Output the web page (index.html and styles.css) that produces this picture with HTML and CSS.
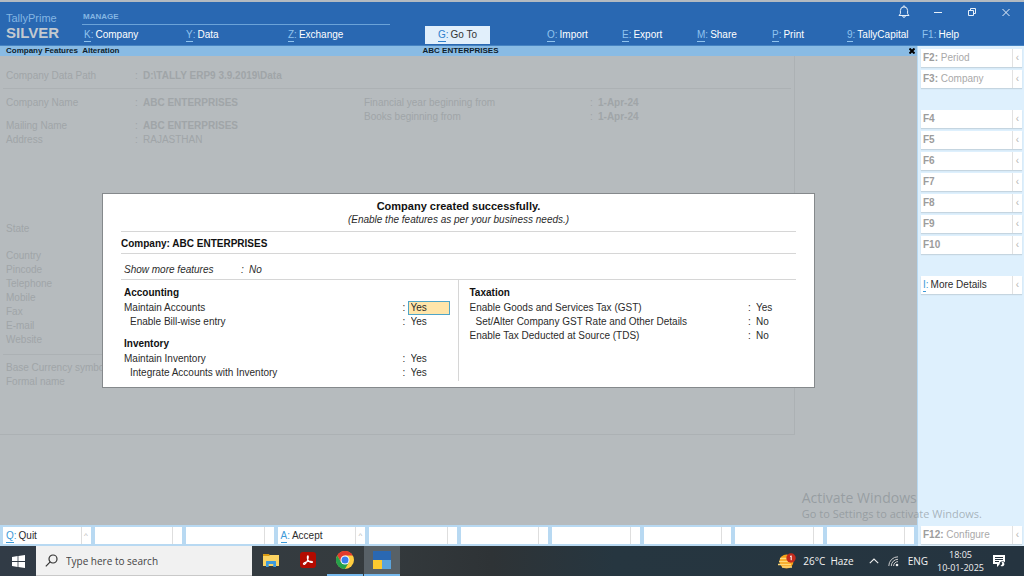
FILE: index.html
```html
<!DOCTYPE html>
<html lang="en">
<head>
<meta charset="utf-8">
<meta name="viewport" content="width=device-width, initial-scale=1">
<title>TallyPrime - Company Features Alteration</title>
<link rel="stylesheet" href="styles.css">
</head>
<body>
<div class="app">
  <header class="topbar">
    <div class="brand">
      <span class="brand-name">TallyPrime</span>
      <span class="brand-edition">SILVER</span>
    </div>
    <div class="manage">
      <span class="manage-title">MANAGE</span>
      <nav class="manage-menu">
        <button class="menu-item"><span class="key">K</span><i>:</i>Company</button>
        <button class="menu-item"><span class="key">Y</span><i>:</i>Data</button>
        <button class="menu-item"><span class="key">Z</span><i>:</i>Exchange</button>
      </nav>
    </div>
    <div class="goto-wrap">
      <button class="goto"><span class="key">G</span><i>:</i>Go To</button>
    </div>
    <div class="right-area">
      <div class="window-controls">
        <button class="win-btn" aria-label="Notifications"><svg width="12" height="14" viewBox="0 0 12 14"><path d="M1 10.5h10L9.600 8.800V5.500a3.600 3.600 0 0 0-7.200 0v3.300zM5 1.800a1 1 0 0 1 2 0M4.700 11a1.300 1.300 0 0 0 2.600 0"/></svg></button>
        <button class="win-btn" aria-label="Minimize"><svg width="12" height="14" viewBox="0 0 12 14"><path d="M2 7.500h8"/></svg></button>
        <button class="win-btn" aria-label="Restore"><svg width="12" height="14" viewBox="0 0 12 14"><path d="M2.500 5.500h5v5h-5zM4.500 5.500v-2h5v5h-2"/></svg></button>
        <button class="win-btn" aria-label="Close window"><svg width="12" height="14" viewBox="0 0 12 14"><path d="M2.500 4l7 7M9.500 4l-7 7"/></svg></button>
      </div>
      <nav class="right-menu">
        <button class="menu-item"><span class="key">O</span><i>:</i>Import</button>
        <button class="menu-item"><span class="key">E</span><i>:</i>Export</button>
        <button class="menu-item"><span class="key">M</span><i>:</i>Share</button>
        <button class="menu-item"><span class="key">P</span><i>:</i>Print</button>
        <button class="menu-item"><span class="key">9</span><i>:</i>TallyCapital</button>
        <button class="menu-item"><span class="key plain">F1</span><i>:</i>Help</button>
      </nav>
    </div>
  </header>

  <div class="content">
    <main class="main">
      <div class="titlebar">
        <span>Company Features&nbsp; Alteration</span>
        <span class="titlebar-company">ABC ENTERPRISES</span>
        <button class="titlebar-close" aria-label="Close"><svg width="6" height="6" viewBox="0 0 6 6"><path d="M.5.5l5 5M5.500.5l-5 5"/></svg></button>
      </div>

      <div class="workspace">
        <section class="form">
          <dl class="form-part path-part">
            <div class="field"><dt>Company Data Path</dt><dd class="strong">D:\TALLY ERP9 3.9.2019\Data</dd></div>
          </dl>
          <div class="form-part details-part">
            <dl class="details">
              <div class="field space-after"><dt>Company Name</dt><dd class="strong">ABC ENTERPRISES</dd></div>
              <div class="field"><dt>Mailing Name</dt><dd class="strong">ABC ENTERPRISES</dd></div>
              <div class="field address"><dt>Address</dt><dd>RAJASTHAN</dd></div>
              <div class="field state"><dt>State</dt></div>
              <div class="field"><dt>Country</dt></div>
              <div class="field"><dt>Pincode</dt></div>
              <div class="field"><dt>Telephone</dt></div>
              <div class="field"><dt>Mobile</dt></div>
              <div class="field"><dt>Fax</dt></div>
              <div class="field"><dt>E-mail</dt></div>
              <div class="field"><dt>Website</dt></div>
            </dl>
            <dl class="years">
              <div class="field"><dt>Financial year beginning from</dt><dd class="strong">1-Apr-24</dd></div>
              <div class="field"><dt>Books beginning from</dt><dd class="strong">1-Apr-24</dd></div>
            </dl>
          </div>
          <dl class="form-part currency-part">
            <div class="field"><dt>Base Currency symbol</dt></div>
            <div class="field"><dt>Formal name</dt></div>
          </dl>
        </section>

        <div class="overlay">
          <section class="dialog" role="dialog" aria-labelledby="dialog-title">
            <h1 id="dialog-title" class="dialog-title">Company created successfully.</h1>
            <p class="dialog-note">(Enable the features as per your business needs.)</p>
            <p class="dialog-company">Company: ABC ENTERPRISES</p>
            <label class="more-row"><span class="more-label">Show more features</span><span class="colon">:</span><input class="value" value="No"></label>
            <div class="features">
              <div class="feature-col">
                <h2 class="group-title">Accounting</h2>
                <label class="feature"><span class="feature-label">Maintain Accounts</span><span class="colon">:</span><input class="value active" value="Yes"></label>
                <label class="feature sub"><span class="feature-label">Enable Bill-wise entry</span><span class="colon">:</span><input class="value" value="Yes"></label>
                <h2 class="group-title later">Inventory</h2>
                <label class="feature"><span class="feature-label">Maintain Inventory</span><span class="colon">:</span><input class="value" value="Yes"></label>
                <label class="feature sub"><span class="feature-label">Integrate Accounts with Inventory</span><span class="colon">:</span><input class="value" value="Yes"></label>
              </div>
              <div class="feature-col taxation">
                <h2 class="group-title">Taxation</h2>
                <label class="feature"><span class="feature-label">Enable Goods and Services Tax (GST)</span><span class="colon">:</span><input class="value" value="Yes"></label>
                <label class="feature sub"><span class="feature-label">Set/Alter Company GST Rate and Other Details</span><span class="colon">:</span><input class="value" value="No"></label>
                <label class="feature"><span class="feature-label">Enable Tax Deducted at Source (TDS)</span><span class="colon">:</span><input class="value" value="No"></label>
              </div>
            </div>
          </section>
        </div>
      </div>

      <div class="bottombar">
        <button class="slot"><span class="slot-text"><span class="key">Q</span><i>:</i>Quit</span><span class="slot-more">^</span></button>
        <button class="slot" aria-label="Empty"><span class="slot-text"></span><span class="slot-more"></span></button>
        <button class="slot" aria-label="Empty"><span class="slot-text"></span><span class="slot-more"></span></button>
        <button class="slot"><span class="slot-text"><span class="key">A</span><i>:</i>Accept</span><span class="slot-more">^</span></button>
        <button class="slot" aria-label="Empty"><span class="slot-text"></span><span class="slot-more"></span></button>
        <button class="slot" aria-label="Empty"><span class="slot-text"></span><span class="slot-more"></span></button>
        <button class="slot" aria-label="Empty"><span class="slot-text"></span><span class="slot-more"></span></button>
        <button class="slot" aria-label="Empty"><span class="slot-text"></span><span class="slot-more"></span></button>
        <button class="slot" aria-label="Empty"><span class="slot-text"></span><span class="slot-more"></span></button>
        <button class="slot" aria-label="Empty"><span class="slot-text"></span><span class="slot-more"></span></button>
      </div>
    </main>

    <aside class="side">
      <button class="side-btn"><span class="side-text"><b>F2:</b> Period</span><span class="side-more">‹</span></button>
      <button class="side-btn"><span class="side-text"><b>F3:</b> Company</span><span class="side-more">‹</span></button>
      <button class="side-btn group-start"><span class="side-text"><b>F4</b></span><span class="side-more">‹</span></button>
      <button class="side-btn"><span class="side-text"><b>F5</b></span><span class="side-more">‹</span></button>
      <button class="side-btn"><span class="side-text"><b>F6</b></span><span class="side-more">‹</span></button>
      <button class="side-btn"><span class="side-text"><b>F7</b></span><span class="side-more">‹</span></button>
      <button class="side-btn"><span class="side-text"><b>F8</b></span><span class="side-more">‹</span></button>
      <button class="side-btn"><span class="side-text"><b>F9</b></span><span class="side-more">‹</span></button>
      <button class="side-btn"><span class="side-text"><b>F10</b></span><span class="side-more">‹</span></button>
      <button class="side-btn group-start enabled"><span class="side-text"><span class="key">I</span><i>:</i>More Details</span><span class="side-more">‹</span></button>
      <button class="side-btn last"><span class="side-text"><b>F12:</b> Configure</span><span class="side-more">‹</span></button>
    </aside>

    <div class="watermark">
      <div class="watermark-title">Activate Windows</div>
      <div class="watermark-note">Go to Settings to activate Windows.</div>
    </div>
  </div>

  <footer class="taskbar">
    <button class="start" aria-label="Start"><svg width="13" height="13" viewBox="0 0 13 13" fill="#fff"><path d="M0 1.900l5.600-.8v5H0zM6.400 1L13 0v6.100H6.400zM0 6.900h5.600v5L0 11.100zM6.400 6.900H13V13l-6.600-1z"/></svg></button>
    <label class="search">
      <svg width="13" height="13" viewBox="0 0 13 13" fill="none" stroke="#333" stroke-width="1.200"><circle cx="8" cy="5" r="4"/><path d="M5.200 7.900L.8 12.300"/></svg>
      <input class="search-input" type="text" placeholder="Type here to search" aria-label="Type here to search">
    </label>
    <button class="task" aria-label="File Explorer"><svg width="17" height="15" viewBox="0 0 17 15"><path d="M0 1h6l1 1.500h9V5H0z" fill="#d99a12"/><path d="M0 3h6l1-1h9v11H0z" fill="#fcd462"/><path d="M3 14V8.500Q3 8 3.500 8h9q.5 0 .5.500V14h-2.700v-3H5.700v3z" fill="#3f9bdc"/></svg></button>
    <button class="task" aria-label="Acrobat Reader"><svg width="16" height="16" viewBox="0 0 16 16"><rect width="16" height="16" rx="3" fill="#b30b00"/><path d="M3.500 12.200c-.8-.8 1.800-2.200 4.500-2.700 2.300-.5 4.600-.3 4.600.6s-2.400.4-4-1.100C7 7.500 7 4 7.800 3.900c1 0 .4 3.400-1 5.900-1.200 2-2.600 3-3.300 2.400z" fill="none" stroke="#fff" stroke-width="1.100"/></svg></button>
    <button class="task running" aria-label="Chrome"><svg width="18" height="18" viewBox="0 0 18 18"><circle cx="9" cy="9" r="9" fill="#ffcd40"/><path d="M1.200 4.500A9 9 0 0 1 16.800 4.500H9L5.100 11.250z" fill="#e33b2e"/><path d="M1.200 4.500A9 9 0 0 0 9 18l3.900-6.750H5.100z" fill="#26a04b"/><circle cx="9" cy="9" r="4.500" fill="#fff"/><circle cx="9" cy="9" r="3.500" fill="#3b7ded"/></svg></button>
    <button class="task running current" aria-label="TallyPrime"><svg width="18" height="18" viewBox="0 0 18 18"><path d="M0 0h18v9H0z" fill="#2a68b2"/><path d="M0 9h9v9H0z" fill="#fcc92f"/><path d="M9 9h9v9H9z" fill="#5ba4dc"/></svg></button>
    <div class="tray">
      <button class="weather"><svg width="18" height="17" viewBox="0 0 18 17"><circle cx="8.500" cy="8.500" r="7" fill="#f6a21a"/><path d="M2 5.500h8M1 8.500h13M0 11.500h13M4 14h10" stroke="#ffd978" stroke-width="1.300"/><circle cx="13" cy="5" r="4.700" fill="#c42b1c"/><path d="M12 3.700l1.200-.9v4.400" fill="none" stroke="#fff"/></svg><span>26°C&nbsp; Haze</span></button>
      <button class="tray-btn" aria-label="Show hidden icons"><svg width="10" height="6" viewBox="0 0 10 6" fill="none" stroke="#eee" stroke-width="1.100"><path d="M.8 5.200L5 1l4.200 4.200"/></svg></button>
      <button class="tray-btn" aria-label="Network"><svg width="11" height="11" viewBox="0 0 11 11" fill="none" stroke="#ccc"><path d="M.8 10A9.200 9.200 0 0 1 10 .8M3.300 10A6.700 6.700 0 0 1 10 3.300M5.600 10A4.400 4.400 0 0 1 10 5.600"/><circle cx="9" cy="9" r="1.300" fill="#eee" stroke="none"/></svg></button>
      <button class="tray-btn">ENG</button>
      <button class="clock"><span>18:05</span><span>10-01-2025</span></button>
      <button class="tray-btn" aria-label="Action center"><svg width="13" height="13" viewBox="0 0 13 13"><path d="M0 0h12v9H7l-3 3V9H0z" fill="#fff"/><path d="M2 2.500h8M2 4.500h8M2 6.500h4" stroke="#26343f"/><circle cx="9.500" cy="9" r="2.800" fill="#26343f"/><path d="M7.500 10.500a2.200 2.200 0 1 0 1-3.500 2 2 0 0 1-1 3.500z" fill="#fff"/></svg></button>
    </div>
  </footer>
</div>
</body>
</html>
```
FILE: styles.css
```css
* { box-sizing: border-box; margin: 0; }

body {
  font: 10px/14px "Liberation Sans", Arial, sans-serif;
  color: #2b2b2b;
}

button, input {
  font: inherit;
  color: inherit;
  background: none;
  border: 0;
  padding: 0;
  border-radius: 0;
}

button { text-align: left; white-space: nowrap; }
input { min-width: 0; outline: 0; }
svg { display: block; flex: none; }
i { font-style: normal; margin-right: 2px; }
dd { margin: 0; }

.app {
  display: flex;
  flex-direction: column;
  min-height: 100vh;
}

/* Header */
.topbar {
  display: flex;
  height: 46px;
  border-top: 2px solid #b3bac1;
  border-bottom: 1px solid #4583c2;
  background: #2968b2;
  color: #fff;
}
.brand {
  display: flex;
  flex-direction: column;
  width: 82px;
  padding: 9px 0 0 6px;
}
.brand-name { font-size: 11px; color: #84b6e3; }
.brand-edition { font-size: 15px; line-height: 16px; font-weight: bold; color: #c3c9cf; }
.manage { width: 308px; padding-top: 8px; }
.manage-title {
  display: block;
  padding-left: 1px;
  font-size: 8px;
  font-weight: bold;
  color: #84b6e3;
  border-bottom: 1px solid #6ba3d8;
}
.manage-menu {
  display: grid;
  grid-template-columns: repeat(3, 1fr);
  padding: 3px 0 0 2px;
}
.menu-item { line-height: 14px; }
.key {
  display: inline-block;
  line-height: 12px;
  color: #8fc3ee;
  border-bottom: 1px solid #8fc3ee;
}
.key.plain { border-color: transparent; }
.menu-item i { color: #8fc3ee; }
.goto-wrap {
  display: flex;
  flex: 1;
  align-items: flex-end;
  padding: 0 0 1px 35px;
}
.goto {
  width: 65px;
  height: 18px;
  text-align: center;
  background: #e1effb;
  color: #333;
}
.goto .key, .goto i { color: #2f80cc; border-color: #2f80cc; }
.right-area { width: 477px; }
.window-controls {
  display: flex;
  justify-content: flex-end;
  gap: 22px;
  padding: 3px 12px 0 0;
  height: 26px;
}
.win-btn { height: 14px; }
.win-btn svg { fill: none; stroke: #e8f1fa; }
.right-menu { display: grid; grid-template-columns: repeat(5, 75px) 1fr; }

/* Body */
.content { position: relative; display: flex; flex: 1; }
.main { display: flex; flex: 1; flex-direction: column; min-width: 0; }
.titlebar {
  display: grid;
  grid-template-columns: 1fr auto 1fr;
  padding: 0 2px 0 6px;
  font-size: 8px;
  line-height: 10px;
  font-weight: bold;
  color: #0d1d2c;
  background: #89bbe4;
}
.titlebar-close { justify-self: end; align-self: center; }
.titlebar-close svg { stroke: #000; stroke-width: 2; }
.workspace {
  position: relative;
  flex: 1;
  background: #b6bbbe;
  color: #a0a5a8;
}
.form {
  width: calc(100% - 122px);
  padding: 0 3px 45px;
  border: solid #acb1b4;
  border-width: 0 1px 1px 0;
}
.form-part { padding: 6px 3px 0; }
.path-part { padding: 13px 3px 5px; border-bottom: 1px solid #acb1b4; }
.details-part { display: flex; padding-top: 7px; padding-bottom: 7px; border-bottom: 1px solid #acb1b4; }
.details { flex: 1; }
.years { width: 424px; }
.field { display: grid; grid-template-columns: 129px 1fr; }
.field dd { display: flex; }
.field dd::before { content: ":"; width: 8px; font-weight: normal; }
.years .field { grid-template-columns: 226px 1fr; }
.strong { font-weight: bold; }
.space-after { margin-bottom: 9px; }
.address { margin-bottom: 75px; }
.state { margin-bottom: 13px; }

/* Dialog */
.overlay {
  position: absolute;
  inset: 0;
  display: flex;
  align-items: center;
  justify-content: center;
}
.dialog {
  width: calc(100% - 204px);
  padding: 5px 18px 6px;
  border: 1px solid #85898c;
  background: #fff;
  color: #2b2b2b;
}
.dialog-title { font-size: 11px; line-height: 14px; text-align: center; color: #111; }
.dialog-note { padding-bottom: 5px; font-style: italic; line-height: 13px; text-align: center; }
.dialog-company {
  padding: 5px 0 2px;
  font-weight: bold;
  color: #111;
  border: solid #d6d6d6;
  border-width: 1px 0;
}
.more-row {
  display: flex;
  padding: 9px 0 2px 3px;
  font-style: italic;
  border-bottom: 1px solid #d6d6d6;
}
.more-label { width: 117px; }
.colon { width: 5px; }
.features { display: grid; grid-template-columns: 1fr 1fr; }
.feature-col { padding: 6px 8px 1px 3px; border-right: 1px solid #d6d6d6; }
.feature-col.taxation { padding: 6px 1px 1px 11px; border-right: 0; }
.group-title { margin-bottom: 1px; font-size: 10px; line-height: 14px; color: #111; }
.group-title.later { margin-top: 8px; }
.feature { display: flex; }
.feature.sub { padding-left: 6px; }
.feature-label { flex: 1; }
.value {
  width: 42px;
  height: 14px;
  padding-left: 2px;
  border: 1px solid transparent;
}
.value.active { border-color: #4fa5c8; background: #ffe5a9; }

/* Bottom buttons */
.bottombar {
  display: grid;
  grid-template-columns: repeat(10, 1fr);
  gap: 4px;
  height: 21px;
  padding: 2px 3px;
  background: #b8d9f2;
}
.slot { display: flex; align-items: stretch; background: #fff; line-height: 17px; }
.slot-text { flex: 1; padding-left: 3px; border-right: 1px solid #dedede; }
.slot-more { width: 9px; font-size: 8px; text-align: center; color: #b5b5b5; }
.slot .key, .slot i, .enabled .key, .enabled i { color: #3d9ad8; border-color: #3d9ad8; }

/* Side buttons */
.side {
  display: flex;
  flex-direction: column;
  gap: 3px;
  width: 107px;
  padding: 3px 2px 2px 3px;
  background: #def0fd;
  border-left: 1px solid #b8d9f2;
}
.side-btn {
  display: flex;
  height: 18px;
  line-height: 17px;
  background: #fff;
  color: #a9a9a9;
  box-shadow: 0 1px 1px #c5d5e0;
}
.side-text { flex: 1; padding-left: 2px; border-right: 1px solid #e2e2e2; }
.side-more { width: 9px; text-align: center; color: #b5b5b5; }
.side-btn b { color: #9c9c9c; }
.group-start { margin-top: 19px; }
.enabled { color: #2b2b2b; }
.last { margin-top: auto; }

.watermark {
  position: absolute;
  right: 42px;
  bottom: 25px;
  font-family: "Open Sans", "Noto Sans", sans-serif;
  color: rgba(130, 138, 143, 0.6);
  pointer-events: none;
}
.watermark-title { font-size: 14px; line-height: 18px; }
.watermark-note { font-size: 11px; line-height: 14px; }

/* Taskbar */
.taskbar {
  display: flex;
  height: 30px;
  font-family: "Open Sans", "Noto Sans", sans-serif;
  color: #f2f2f2;
  background: linear-gradient(90deg, #313b46 0%, #353b3e 35%, #2e3336 48%, #263640 60%, #253440 100%);
}
.start { display: grid; place-items: center; width: 36px; }
.search {
  display: flex;
  align-items: center;
  gap: 8px;
  width: 216px;
  padding-left: 9px;
  background: #f1f1f1;
  border-bottom: 1px solid #c9c9c9;
}
.search-input { flex: 1; font-size: 10px; color: #333; }
.search-input::placeholder { color: #444; opacity: 1; }
.task {
  display: grid;
  place-items: center;
  width: 36px;
  margin-left: 1px;
  border-bottom: 2px solid transparent;
}
.running { border-color: #76b9ed; }
.current { background-color: #586167; }
.tray { display: flex; align-items: center; gap: 9px; margin-left: auto; padding-right: 18px; }
.weather { display: flex; align-items: center; gap: 7px; margin-right: 6px; }
.clock { display: flex; flex-direction: column; align-items: center; font-size: 9px; line-height: 13px; }
```
